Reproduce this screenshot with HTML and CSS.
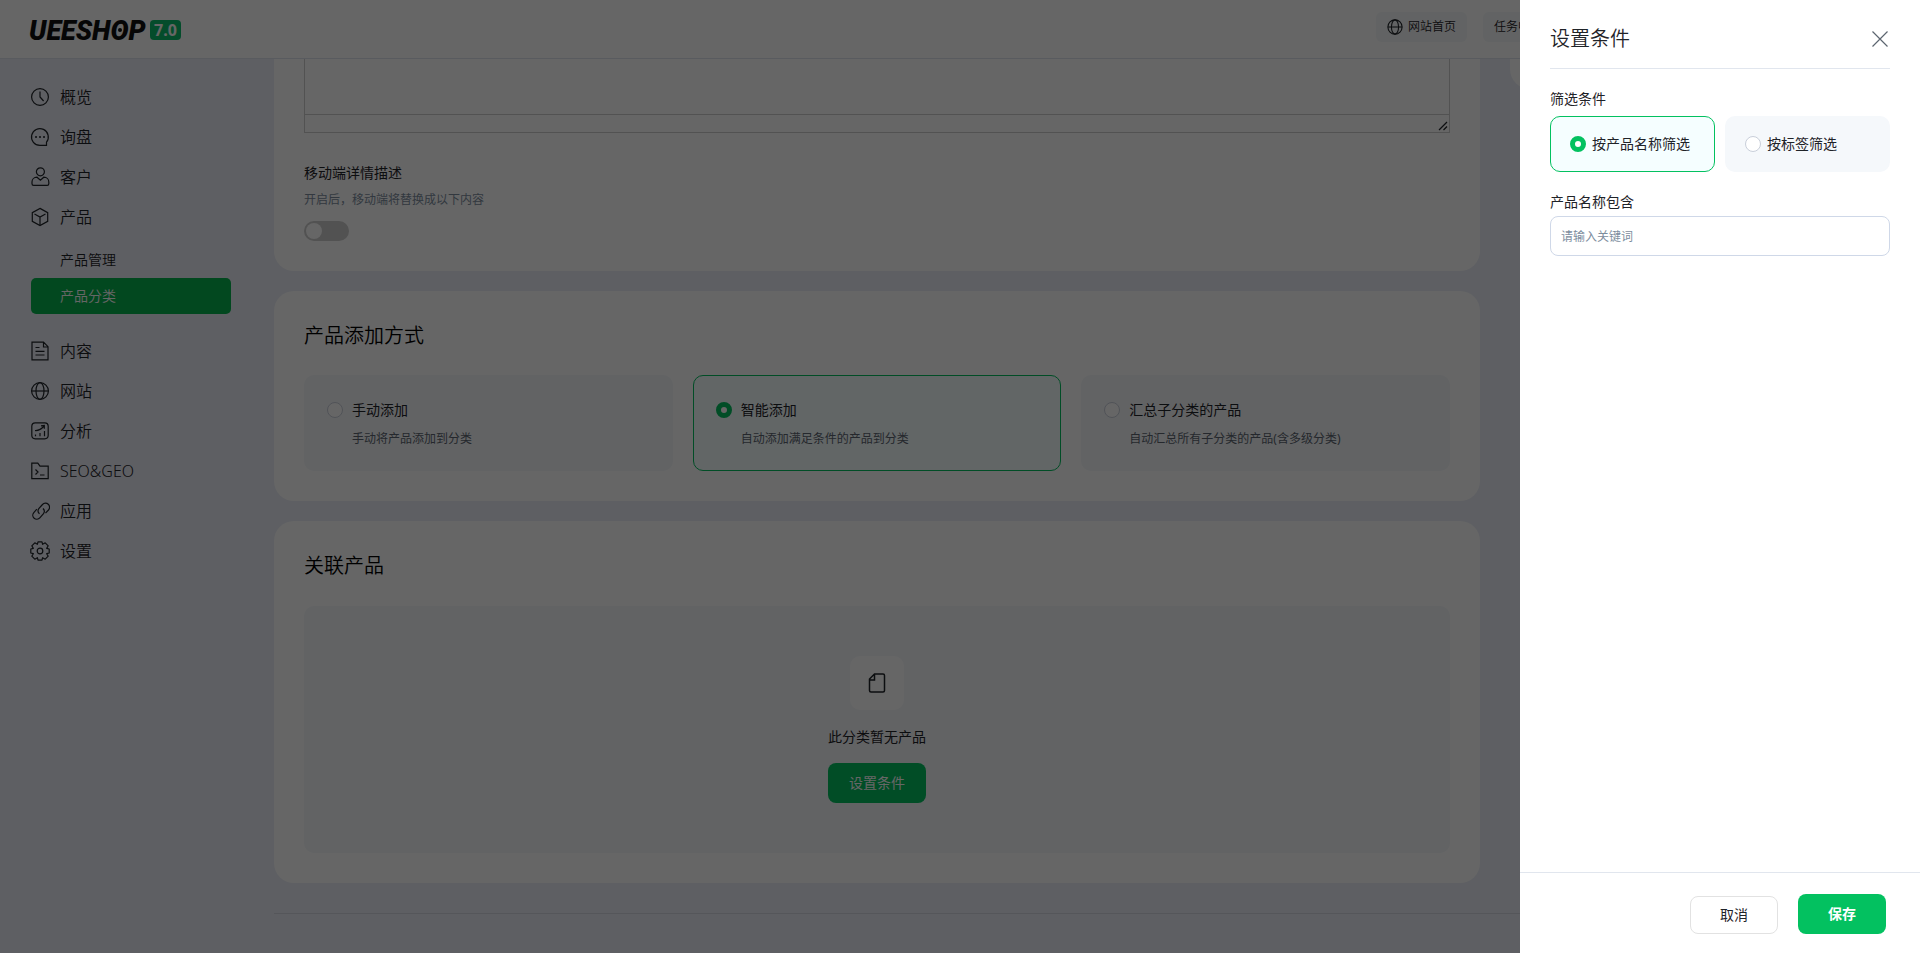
FILE: index.html
```html
<!DOCTYPE html>
<html lang="zh-CN">
<head>
<meta charset="UTF-8"><meta name="viewport" content="width=device-width,initial-scale=1">
<title>产品分类</title>
<link rel="stylesheet" href="styles.css">
</head>
<body>
<header class="topbar">
  <svg class="logo" viewBox="0 0 120 24" role="img" aria-label="UEESHOP">
    <text x="-1" y="22">UEESHOP</text>
    <circle cx="90" cy="12" r="2"/>
  </svg>
  <span class="version">7.0</span>
  <nav class="top-links">
    <a href="#" class="top-link"><svg class="globe" viewBox="0 0 18 18"><circle cx="9" cy="9" r="8"/><ellipse cx="9" cy="9" rx="4" ry="8"/><path d="M1 9h16"/></svg>网站首页</a>
    <a href="#" class="top-link">任务中心</a>
  </nav>
</header>

<div class="layout">
<nav class="sidebar">
  <a href="#"><svg viewBox="0 0 20 20"><circle cx="10" cy="10" r="8.4"/><path d="M10 4.5V10l3.6 4"/></svg>概览</a>
  <a href="#"><svg viewBox="0 0 20 20"><path d="M16.500 15.200A8.400 8.400 0 1 0 10 18.400h6.500z"/><path class="dots" d="M6 10h.01M10 10h.01M14 10h.01"/></svg>询盘</a>
  <a href="#"><svg viewBox="0 0 20 20"><circle cx="10.400" cy="4.800" r="4"/><path d="M7 10.200C4 10.200 2 12.300 2 15v1.800c0 1 .6 1.600 1.600 1.600h13.600c1 0 1.600-.6 1.600-1.600V15c0-2.700-2-4.800-5-4.800l-3.400 3z"/></svg>客户</a>
  <a href="#"><svg viewBox="0 0 20 20"><path d="M10 1.400l7.700 4.200v8.800L10 18.600l-7.700-4.200V5.600z"/><path d="M4.500 7l5.500 3 5.500-3M10 10v8"/></svg>产品</a>
  <div class="submenu">
    <a href="#">产品管理</a>
    <a href="#" class="active">产品分类</a>
  </div>
  <a href="#"><svg viewBox="0 0 20 20"><path d="M2 1.200h11.500L18 5.700v13.100H2zM13.500 1.500V6H18M5.500 6.500h4M5.500 10.300h9M5.500 14h9"/></svg>内容</a>
  <a href="#"><svg viewBox="0 0 20 20"><circle cx="10" cy="10" r="8.400"/><ellipse cx="10" cy="10" rx="4" ry="8.400"/><path d="M1.600 10h16.800"/></svg>网站</a>
  <a href="#"><svg viewBox="0 0 20 20"><rect x="1.800" y="1.800" width="16.400" height="16" rx="3.500"/><path d="M5 9.500c4 .3 6.500-1.500 9-4.500M11 4.800l3.300-.3v3.300M5.500 13.500v1.800M10 12v3.300M14.500 10v5.300"/></svg>分析</a>
  <a href="#"><svg viewBox="0 0 20 20"><path d="M1.800 17.700V2.200h6l2.200 3h8.200v12.500zM5.500 8.500L8 11l-2.500 2.500M10 14h4.500"/></svg>SEO&amp;GEO</a>
  <a href="#"><svg viewBox="0 0 20 20"><path d="M9.500 12.800a4 4 0 0 1-.5-5.400l3.500-3.900a4 4 0 0 1 6 5.500l-3 3.200M13 7.500a4 4 0 0 1 .5 5.200l-3.700 4.200a4 4 0 0 1-6-5.300l3-3.400"/></svg>应用</a>
  <a href="#"><svg viewBox="0 0 20 20"><path d="M8 .8h4l.6 2.500 2.600-1.500 3 3-1.500 2.600 2.500.6v4l-2.500.6 1.500 2.600-3 3-2.600-1.500-.6 2.500H8l-.6-2.500-2.600 1.500-3-3 1.500-2.600L.8 12V8l2.500-.6-1.500-2.600 3-3 2.600 1.500z" stroke-linejoin="round"/><circle cx="10" cy="10" r="2.800"/></svg>设置</a>
</nav>

<div class="page">
<div class="columns">
<main>
  <section class="card card-detail">
    <div class="editor">
      <textarea aria-label="详情描述"></textarea>
      <div class="editor-bar"><svg viewBox="0 0 10 10"><path d="M1 9l8-8M5.500 9L9 5.500"/></svg></div>
    </div>
    <label class="field-name" for="mobile">移动端详情描述</label>
    <p class="hint">开启后，移动端将替换成以下内容</p>
    <input class="switch" id="mobile" type="checkbox">
  </section>

  <section class="card">
    <h2>产品添加方式</h2>
    <div class="choices">
      <label class="choice"><input type="radio" name="method"><span>手动添加<small>手动将产品添加到分类</small></span></label>
      <label class="choice"><input type="radio" name="method" checked><span>智能添加<small>自动添加满足条件的产品到分类</small></span></label>
      <label class="choice"><input type="radio" name="method"><span>汇总子分类的产品<small>自动汇总所有子分类的产品(含多级分类)</small></span></label>
    </div>
  </section>

  <section class="card">
    <h2>关联产品</h2>
    <div class="empty">
      <div class="empty-icon"><svg viewBox="0 0 18 20"><path d="M6.500 1H15a1.500 1.500 0 0 1 1.500 1.500v15A1.500 1.500 0 0 1 15 19H3a1.500 1.500 0 0 1-1.500-1.500V6zM6.500 1v6h-5"/></svg></div>
      <p>此分类暂无产品</p>
      <button class="btn btn-primary" type="button">设置条件</button>
    </div>
  </section>
</main>
<aside class="card side-card"></aside>
</div>
<footer class="page-footer"></footer>
</div>
</div>

<div class="mask"></div>

<form class="drawer">
  <div class="drawer-head">
    <h2>设置条件</h2>
    <button class="close" type="button" aria-label="关闭"><svg viewBox="0 0 16 16"><path d="M.5.500l15 15M15.500.500l-15 15"/></svg></button>
  </div>
  <fieldset>
    <legend>筛选条件</legend>
    <div class="choices">
      <label class="choice"><input type="radio" name="filter" checked><span>按产品名称筛选</span></label>
      <label class="choice"><input type="radio" name="filter"><span>按标签筛选</span></label>
    </div>
  </fieldset>
  <div class="field">
    <label for="keyword">产品名称包含</label>
    <input id="keyword" type="text" placeholder="请输入关键词">
  </div>
  <div class="drawer-foot">
    <button class="btn btn-cancel" type="button">取消</button>
    <button class="btn btn-primary btn-save" type="submit">保存</button>
  </div>
</form>
</body>
</html>
```

FILE: styles.css
```css
:root{--bg:#ebeef7;--fg:#1f2328;--green:#03c160;--soft:#f5f8fb;--line:#e1e6ee;--muted:#7d8d9e}
*{box-sizing:border-box}
html,body{height:100%}
body{margin:0;overflow:hidden;display:flex;flex-direction:column;background:var(--bg);color:var(--fg);font:14px/20px "Noto Sans","Noto Sans CJK SC",sans-serif}
a{color:inherit;text-decoration:none}
h2,p,fieldset{margin:0}
h2{font-size:20px;line-height:30px;font-weight:350;color:#000}
.drawer h2{color:var(--fg)}
input,button,textarea{font:inherit;color:inherit}
svg{fill:none;stroke:currentColor;stroke-width:1.2;flex:none}

/* top bar */
.topbar{flex:none;height:59px;padding:0 30px;display:flex;align-items:center;background:#fff;border-bottom:1px solid #dfe3ee}
.logo{width:120px;height:24px;overflow:visible;fill:#111;stroke:none}
.logo text{font:italic 900 27px Roboto,sans-serif}
.version{padding:0 4px;border-radius:4px;background:#0bbf6d;color:#fff;font-size:16px;font-weight:700}
.logo,.version{margin-top:2px}
.top-links{display:flex;gap:16px;margin:0 337px 4px auto}
.top-link{display:flex;align-items:center;gap:5px;height:30px;padding:0 11px;border-radius:6px;background:#f5f8f9;font-size:12px;font-weight:350}
.globe{width:16px;height:16px}

/* sidebar */
.layout{display:flex;flex:1;min-height:0}
.sidebar{width:274px;padding:18px 43px 0 30px;font-size:16px;font-weight:350}
.sidebar>a{display:flex;align-items:center;gap:10px;height:40px}
.sidebar svg{width:20px;height:20px}
.dots{stroke-width:2;stroke-linecap:round}
.submenu{margin:5px 0 17px 1px;font-size:14px}
.submenu a{display:block;padding:8px 29px;border-radius:5px}
.submenu .active{background:#07b34f;color:#fff}

/* content */
.page{flex:1;min-width:0;padding-right:30px}
.columns{display:flex;gap:30px;align-items:flex-start}
main{flex:1;min-width:0;display:flex;flex-direction:column;gap:20px}
.card{padding:30px;border-radius:20px;background:#fff}
.card-detail{padding-top:0;border-radius:0 0 20px 20px}
.side-card{width:380px;padding:15px;border-radius:0 0 20px 20px}
.page-footer{margin-top:30px;border-top:1px solid #d5d8e0}
.editor{border:1px solid #ccc;border-top:0}
.editor textarea{display:block;width:100%;height:55px;border:0;padding:8px;resize:none;background:none}
.editor-bar{display:flex;justify-content:flex-end;align-items:flex-end;height:18px;padding:1px;border-top:1px solid #ccc}
.editor-bar svg{width:10px;height:10px}
.field-name{display:block;margin-top:30px}
.hint{margin:7px 0 11px;color:var(--muted);font-size:12px}
.switch{appearance:none;display:block;width:45px;height:20px;margin:0;padding:2px;border-radius:10px;background:#ccc}
.switch::before{content:"";display:block;width:16px;height:16px;border-radius:50%;background:#fff}
.switch:checked{background:var(--green)}

/* radio cards */
.choices{display:flex;gap:20px}
.choice{flex:1;display:flex;gap:9px;padding:24px 22px 22px;border:1px solid transparent;border-radius:10px;background:var(--soft);cursor:pointer}
.choice:has(:checked){border-color:var(--green);background:#f5feff}
.choice input{appearance:none;flex:none;width:16px;height:16px;margin:2px 0 0;border:1px solid #c9cfda;border-radius:50%;background:#fff}
.choice input:checked{border:5px solid var(--green)}
.choice small{display:block;margin-top:10px;font-size:12px;line-height:18px;color:#5c6570}
.card .choices{margin-top:24px}

/* empty state */
.empty{display:flex;flex-direction:column;align-items:center;margin-top:25px;padding:50px 20px;border-radius:10px;background:var(--soft)}
.empty-icon{display:flex;align-items:center;justify-content:center;width:54px;height:54px;margin-bottom:17px;border-radius:10px;background:#fff}
.empty-icon svg{width:18px;height:20px;stroke-width:1.5}
.empty .btn{margin-top:16px}
.btn{height:40px;padding:0 21px;border:0;border-radius:8px;cursor:pointer}
.btn-primary{background:var(--green);color:#fff}

/* drawer */
.mask{position:fixed;inset:0;background:#0009}
.drawer{position:fixed;top:0;right:0;bottom:0;width:400px;display:flex;flex-direction:column;background:#fff}
.drawer-head{display:flex;justify-content:space-between;align-items:center;margin:0 30px 20px;padding:24px 0 14px;border-bottom:1px solid var(--line)}
.close{display:flex;padding:2px;border:0;background:none;color:#5c6570;cursor:pointer}
.close svg{width:16px;height:16px}
.drawer fieldset{padding:0 30px;border:0}
.drawer legend{padding:0;margin-bottom:7px}
.drawer .choices{gap:10px}
.drawer .choice{gap:6px;padding:17px 19px}
.field{padding:20px 30px}
.field label{display:block;margin-bottom:4px}
.field input{display:block;width:100%;height:40px;padding:0 10px;border:1px solid #cfd8e8;border-radius:8px;font-size:12px}
.field input::placeholder{color:var(--muted)}
.drawer-foot{display:flex;justify-content:flex-end;align-items:flex-end;gap:20px;margin-top:auto;padding:21px 34px 19px;border-top:1px solid var(--line)}
.drawer-foot .btn{width:88px;padding:0}
.drawer-foot .btn-cancel{height:38px;border:1px solid #e2e2e2;background:#fff}
.btn-save{font-weight:700}
```
